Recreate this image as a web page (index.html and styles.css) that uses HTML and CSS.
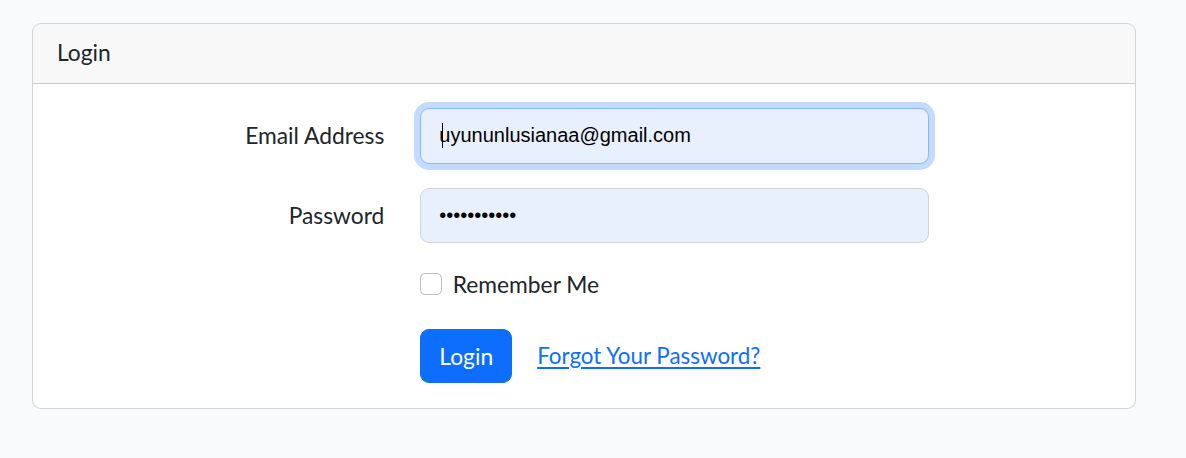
FILE: index.html
```html
<!DOCTYPE html>
<html lang="en">
<head>
<meta charset="utf-8">
<title>Login</title>
<link rel="stylesheet" href="styles.css">
</head>
<body>
<main class="page">
  <div class="card">
    <div class="card-header">Login</div>
    <div class="card-body">
      <form class="login-form">
        <div class="row">
          <label class="col-label" for="email">Email Address</label>
          <div class="col-field">
            <input id="email" class="form-control is-focused" type="email" value="uyununlusianaa@gmail.com">
            <span class="caret"></span>
          </div>
        </div>
        <div class="row">
          <label class="col-label" for="password">Password</label>
          <div class="col-field">
            <input id="password" class="form-control" type="password" value="secretpass1">
          </div>
        </div>
        <div class="row">
          <div class="col-field offset">
            <div class="form-check">
              <input class="form-check-input" type="checkbox" id="remember">
              <label class="form-check-label" for="remember">Remember Me</label>
            </div>
          </div>
        </div>
        <div class="row last">
          <div class="col-field offset actions">
            <button type="button" class="btn btn-primary">Login</button>
            <a class="btn btn-link" href="#">Forgot Your Password?</a>
          </div>
        </div>
      </form>
    </div>
  </div>
</main>
</body>
</html>
```
FILE: styles.css
```css
* { box-sizing: border-box; }
html, body {
  margin: 0;
  padding: 0;
  background: #f8fafc;
}
body {
  font-family: Lato, "Noto Sans", sans-serif;
  font-size: 22.8px;
  line-height: 34.56px;
  color: #212529;
}
.page {
  padding: 23px 0 0 32px;
}
.card {
  width: 1104px;
  background: #fff;
  border: 1px solid rgba(0, 0, 0, 0.175);
  border-radius: 9px;
  overflow: hidden;
}
.card-header {
  padding: 11px 24px 12px;
  height: 60px;
  background: rgba(33, 37, 41, 0.03);
  border-bottom: 1px solid rgba(0, 0, 0, 0.175);
}
.card-body {
  padding: 24px 24px 25px;
}
.row {
  display: flex;
  margin: 0 -18px 24px;
}
.row.last { margin-bottom: 0; }
.col-label {
  width: 363.33px;
  padding: 10px 18px 10.5px;
  text-align: right;
}
.col-field {
  width: 545px;
  padding: 0 18px;
  position: relative;
}
.col-field.offset {
  margin-left: 363.33px;
}
.actions {
  display: flex;
  align-items: center;
  gap: 6px;
}
.form-control {
  display: block;
  width: 100%;
  height: 55.5px;
  padding: 9px 18px;
  font-family: "Liberation Sans", Arial, sans-serif;
  font-size: 20px;
  line-height: 34.56px;
  color: #000;
  background: #e8f0fe;
  border: 1px solid #ced4da;
  border-radius: 9px;
  outline: none;
}
.form-control.is-focused {
  border-color: #86b7fe;
  box-shadow: 0 0 0 6px rgba(13, 110, 253, 0.25);
}
.caret {
  position: absolute;
  left: 40px;
  top: 15px;
  width: 1px;
  height: 25px;
  background: #000;
}
.form-check {
  min-height: 34.56px;
  padding-left: 32.4px;
  margin-bottom: 3px;
}
.form-check-input {
  float: left;
  margin: 6px 0 0 -32.4px;
  width: 21.6px;
  height: 21.6px;
  appearance: none;
  -webkit-appearance: none;
  background: #fff;
  border: 1px solid rgba(0, 0, 0, 0.25);
  border-radius: 5.4px;
}
.btn {
  display: block;
  height: 54.56px;
  padding: 9px 18px;
  font-family: inherit;
  font-size: 22.8px;
  line-height: 34.56px;
  border: 1px solid transparent;
  border-radius: 9px;
}
.btn-primary {
  color: #fff;
  background: #0d6efd;
  border-color: #0d6efd;
}
.btn-link {
  color: #0d6efd;
  font-size: 22.4px;
  text-decoration: underline;
  text-underline-offset: 3px;
}
```
